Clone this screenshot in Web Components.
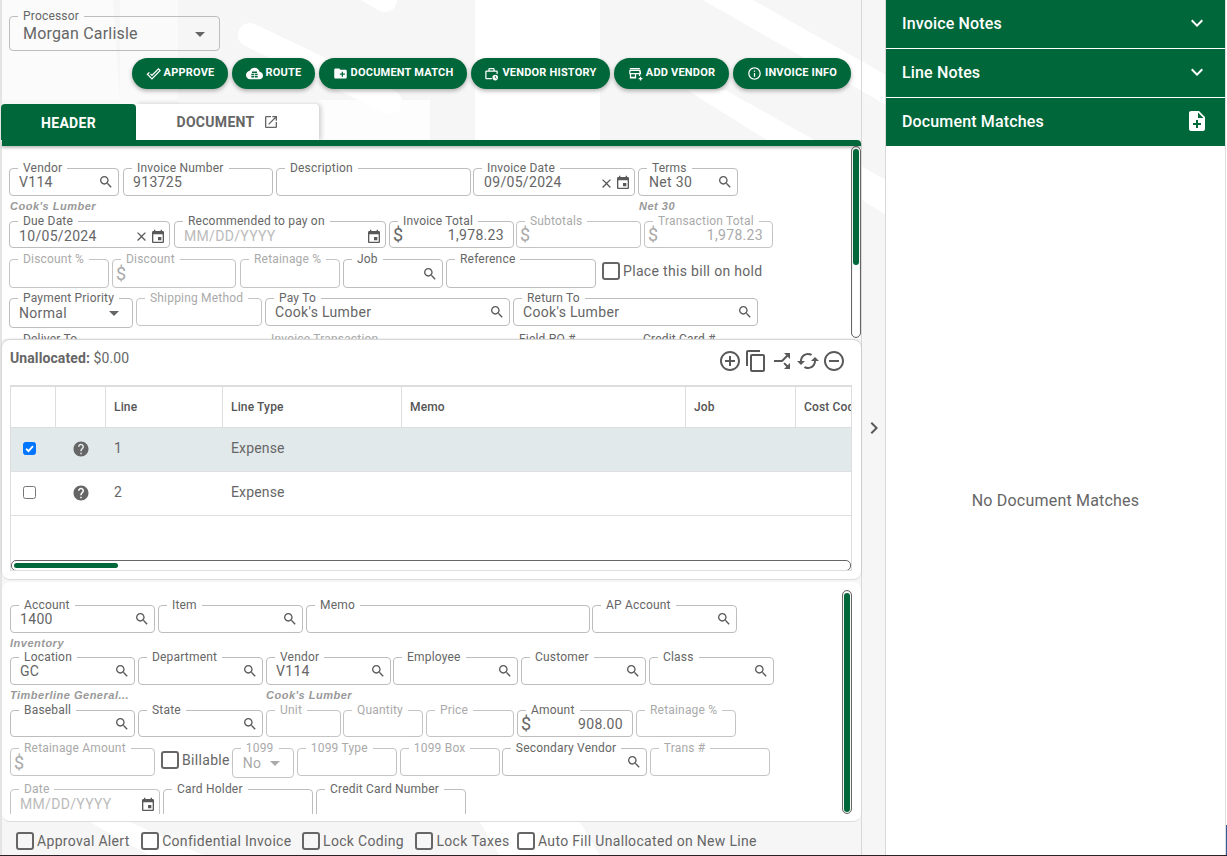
<!DOCTYPE html>
<html><head><meta charset="utf-8">
<style>
html,body{margin:0;padding:0;height:856px;overflow:hidden;background:#fff}
body{font-family:Roboto,"Liberation Sans",sans-serif;color:#666}
</style></head>
<body>
<invoice-app></invoice-app>
<script>
const P={
search:'M15.5 14h-.79l-.28-.27C15.41 12.59 16 11.11 16 9.5 16 5.91 13.09 3 9.5 3S3 5.91 3 9.5 5.91 16 9.5 16c1.61 0 3.09-.59 4.23-1.57l.27.28v.79l5 4.99L20.49 19l-4.99-5zm-6 0C7.01 14 5 11.99 5 9.5S7.01 5 9.5 5 14 7.01 14 9.5 11.99 14 9.5 14z',
event:'M17 12h-5v5h5v-5zM16 1v2H8V1H6v2H5c-1.11 0-1.99.9-1.99 2L3 19c0 1.1.89 2 2 2h14c1.1 0 2-.9 2-2V5c0-1.1-.9-2-2-2h-1V1h-2zm3 18H5V8h14v11z',
close:'M19 6.41L17.59 5 12 10.59 6.41 5 5 6.41 10.59 12 5 17.59 6.41 19 12 13.41 17.59 19 19 17.59 13.41 12z',
folder:'M20 6h-8l-2-2H4c-1.11 0-1.99.89-1.99 2L2 18c0 1.11.89 2 2 2h16c1.11 0 2-.89 2-2V8c0-1.11-.89-2-2-2zm-1 8h-3v3h-2v-3h-3v-2h3V9h2v3h3v2z',
info:'M11 7h2v2h-2zm0 4h2v6h-2zm1-9C6.48 2 2 6.48 2 12s4.48 10 10 10 10-4.48 10-10S17.52 2 12 2zm0 18c-4.41 0-8-3.59-8-8s3.59-8 8-8 8 3.59 8 8-3.59 8-8 8z',
open:'M19 19H5V5h7V3H5c-1.11 0-2 .9-2 2v14c0 1.1.89 2 2 2h14c1.1 0 2-.9 2-2v-7h-2v7zM14 3v2h3.59l-9.83 9.83 1.41 1.41L19 6.41V10h2V3h-7z',
help:'M12 2C6.48 2 2 6.48 2 12s4.48 10 10 10 10-4.48 10-10S17.52 2 12 2zm1 17h-2v-2h2v2zm2.07-7.75l-.9.92C13.45 12.9 13 13.5 13 15h-2v-.5c0-1.1.45-2.1 1.17-2.83l1.24-1.26c.37-.36.59-.86.59-1.41 0-1.1-.9-2-2-2s-2 .9-2 2H8c0-2.21 1.79-4 4-4s4 1.79 4 4c0 .88-.36 1.68-.93 2.25z',
add:'M13 7h-2v4H7v2h4v4h2v-4h4v-2h-4V7zm-1-5C6.48 2 2 6.48 2 12s4.48 10 10 10 10-4.48 10-10S17.52 2 12 2zm0 18c-4.41 0-8-3.59-8-8s3.59-8 8-8 8 3.59 8 8-3.59 8-8 8z',
copy:'M16 1H4c-1.1 0-2 .9-2 2v14h2V3h12V1zm3 4H8c-1.1 0-2 .9-2 2v14c0 1.1.9 2 2 2h11c1.1 0 2-.9 2-2V7c0-1.1-.9-2-2-2zm0 16H8V7h11v14z',
remove:'M7 11v2h10v-2H7zm5-9C6.48 2 2 6.48 2 12s4.48 10 10 10 10-4.48 10-10S17.52 2 12 2zm0 18c-4.41 0-8-3.59-8-8s3.59-8 8-8 8 3.59 8 8-3.59 8-8 8z',
split:'M14 4l2.29 2.29-2.88 2.88 1.42 1.42 2.88-2.88L20 10V4zm-4 0H4v6l2.29-2.29 4.71 4.7V20h2v-8.41l-5.29-5.3z',
sync:'M12 4V1L8 5l4 4V6c3.31 0 6 2.69 6 6 0 1.01-.25 1.97-.7 2.8l1.46 1.46C19.54 15.03 20 13.57 20 12c0-4.42-3.58-8-8-8zm0 14c-3.31 0-6-2.69-6-6 0-1.01.25-1.97.7-2.8L5.24 7.74C4.46 8.97 4 10.43 4 12c0 4.42 3.58 8 8 8v3l4-4-4-4v3z',
note:'M14 2H6c-1.1 0-1.99.9-1.99 2L4 20c0 1.1.89 2 1.99 2H18c1.1 0 2-.9 2-2V8l-6-6zm2 14h-3v3h-2v-3H8v-2h3v-3h2v3h3v2zm-3-7V3.5L18.5 9H13z',
more:'M16.59 8.59L12 13.17 7.41 8.59 6 10l6 6 6-6z',
right:'M10 6L8.59 7.41 13.17 12l-4.58 4.59L10 18l6-6z',
cloud:'M19.35 10.04C18.67 6.59 15.64 4 12 4 9.11 4 6.6 5.64 5.35 8.04 2.34 8.36 0 10.91 0 14c0 3.31 2.69 6 6 6h13c2.76 0 5-2.24 5-5 0-2.64-2.05-4.78-4.65-4.96zM8.5 9h7v2.2h-7zM7.5 12.5h4v1.6h-4zM12.5 12.5h4v1.6h-4zM7.5 15.2h4v2.4h-4zM12.5 15.2h4v2.4h-4z',
approve:'M.8 13.2 4.6 9.4l1.5 1.5-2.4 2.3 5.8 5.8L21.3 7.2l-1.4-1.4-10.4 10.4-3-3 1.4-1.4 1.6 1.6L19.9 3l4.2 4.2L9.5 21.8z',
history:'M9 3h6c1.1 0 2 .9 2 2v2h3c1.1 0 2 .9 2 2v4.2a6 6 0 0 0-2-.7V9H4v10h8.3c.2.7.5 1.4.9 2H4c-1.1 0-2-.9-2-2V9c0-1.1.9-2 2-2h3V5c0-1.1.9-2 2-2zm0 2v2h6V5zm9 9a4.5 4.5 0 1 1 0 9 4.5 4.5 0 0 1 0-9zm-.7 1.7v3.2l2.6 1.5.6-1-2-1.1v-2.6z',
store:'M3 3h16v2H3zM2 6h18l1 5v2h-1.5v3h-2v-3H13v7H3v-7H2v-2zm2.2 2-.5 3h14.6l-.5-3zM5 13v4h6v-4zm14 4h2v2h2v2h-2v2h-2v-2h-2v-2h2z'
};
const EO={approve:1,cloud:1,history:1,store:1};
const ico=(n,s,c)=>`<svg width="${s}" height="${s}" viewBox="0 0 24 24" fill="${c||'currentColor'}" style="display:block;flex:none"><path ${EO[n]?'fill-rule="evenodd"':''} d="${P[n]}"/></svg>`;
const def=(n,c)=>customElements.define(n,c);
class Base extends HTMLElement{
  constructor(){super();this.attachShadow({mode:'open'})}
  a(k,d=''){return this.hasAttribute(k)?this.getAttribute(k):d}
}
/* Outlined field */
def('x-field',class extends Base{connectedCallback(){
  const w=this.a('w'),h=this.a('h','35'),ml=this.a('ml','3'),off=this.hasAttribute('off'),icon=this.a('icon'),val=this.a('value'),ph=this.a('ph'),money=this.hasAttribute('money'),right=this.hasAttribute('right'),sel=this.hasAttribute('select'),clear=this.hasAttribute('clear'),pl=this.a('pl','9'),fs=this.a('fs','14'),vy=+this.a('vy','1');
  this.shadowRoot.innerHTML=`<style>
  :host{display:block;flex:none;width:${w}px;height:${h}px;margin-left:${ml}px;font-size:12px}
  fieldset{box-sizing:border-box;height:100%;width:100%;margin:0;padding:0;border:1px solid ${off?'#c4c4c4':'#bdbdbd'};border-radius:4px;min-width:0;background:transparent}
  legend{margin-left:8px;padding:0 5px;line-height:14px;height:14px;font-size:12px;letter-spacing:.19px;color:${off?'#aaa':'#666'};white-space:nowrap}
  .body{box-sizing:border-box;display:flex;align-items:center;width:100%;height:${+h-9}px;margin-top:${vy-7}px;padding:0 ${icon=='event'?3:4}px 0 ${money?0:pl}px}
  .val{flex:1;min-width:0;font-size:${fs}px;letter-spacing:${fs=='16'?'.19':'.32'}px;color:${off?'#aaa':'#666'};white-space:nowrap;text-align:${right?'right':'left'};padding-right:${right?'5px':'0'}}
  .ph{color:#bbb}
  .d{font-size:18px;margin-left:3px;color:${off?'#aaa':'#666'};width:13px}
  .i{color:#595959;display:flex;align-items:center;gap:1px}
  .lo{margin-top:2px}
  .car{width:0;height:0;border:5px solid transparent;border-top-color:${off?'#aaa':'#666'};border-bottom:0;margin-right:${this.a('cm','9')}px;margin-top:1px}
  </style><fieldset><legend>${this.a('label')}</legend><div class="body">${money?'<span class="d">$</span>':''}<span class="val">${ph?`<span class="ph">${ph}</span>`:val}</span><span class="i ${icon=='event'?'lo':''}">${clear?ico('close',15,'#595959'):''}${icon?ico(icon,16):''}${sel?'<span class="car"></span>':''}</span></div></fieldset>`;
}});
/* Checkbox */
def('x-check',class extends Base{connectedCallback(){
  const ml=this.a('ml','0');
  this.shadowRoot.innerHTML=`<style>:host{display:flex;flex:none;align-items:center;gap:3px;margin-left:${ml}px;font-size:14px;letter-spacing:.32px;color:#666;white-space:nowrap}
  i{display:block;box-sizing:border-box;width:18px;height:18px;border:2px solid #666;border-radius:3px}</style><i></i><slot></slot>`;
}});
/* Helper caption */
def('x-hint',class extends Base{connectedCallback(){
  this.shadowRoot.innerHTML=`<style>:host{display:block;flex:none;width:${this.a('w','auto')}${this.hasAttribute('w')?'px':''};height:18px;font:italic 700 11px/20px "Liberation Sans",sans-serif;letter-spacing:.5px;color:#999;white-space:nowrap;margin-left:${this.a('ml','0')}px}</style><slot></slot>`;
}});
/* Action pill */
def('x-btn',class extends Base{connectedCallback(){
  const w=this.a('w');
  this.shadowRoot.innerHTML=`<style>:host{display:flex;box-sizing:border-box;width:${w}px;height:31px;align-items:center;justify-content:center;gap:${this.a('gap','3')}px;background:#00673a;color:#fff;border-radius:16px;font-size:11px;font-weight:700;letter-spacing:.2px;text-transform:uppercase;padding-bottom:3px;box-shadow:0 2px 4px rgba(0,0,0,.3)}
  svg{margin-top:3px}</style>${ico(this.a('icon'),+this.a('s','15'),'#fff')}<slot></slot>`;
}});
/* Accordion bar */
def('x-acc',class extends Base{connectedCallback(){
  this.shadowRoot.innerHTML=`<style>:host{display:flex;box-sizing:border-box;height:48px;flex:none;align-items:center;justify-content:space-between;background:#00673a;color:#fff;padding:0 16px 2px 16px;font-size:16px;font-weight:500;letter-spacing:.15px;margin-bottom:1px}</style><slot></slot>${ico(this.a('icon','more'),24,'#fff')}`;
}});
/* Scrollbars */
def('x-vbar',class extends Base{connectedCallback(){
  this.shadowRoot.innerHTML=`<style>:host{display:block;box-sizing:border-box;width:10px;height:${this.a('h')}px;border:1px solid #666;border-radius:5px;background:#fff;padding:2px 1px 1px;box-shadow:inset 0 0 1px #999}
  b{display:block;height:${this.a('t')}px;background:#00673a;border-radius:4px}</style><b></b>`;
}});
def('x-hbar',class extends Base{connectedCallback(){
  this.shadowRoot.innerHTML=`<style>:host{display:block;box-sizing:border-box;height:11px;border:1px solid #666;border-radius:5px;background:#fff;padding:2px 2px;}
  b{display:block;width:${this.a('t')}px;height:100%;background:#00673a;border-radius:3px}</style><b></b>`;
}});
/* Lines table */
def('x-lines',class extends Base{connectedCallback(){
  const cols='44px 50px 117px 179px 284px 110px 1fr';
  const row=(n,sel)=>`<div class="tr ${sel?'sel':''}"><div class="c k"><span class="cb ${sel?'on':''}">${sel?'<svg width="13" height="13" viewBox="0 0 13 13"><path d="M2.5 6.8 5.3 9.6 10.6 3.6" fill="none" stroke="#fff" stroke-width="2.2"/></svg>':''}</span></div><div class="c q">${ico('help',18,'#666')}</div><div class="t">${n}</div><div class="t">Expense</div></div>`;
  this.shadowRoot.innerHTML=`<style>:host{display:block;box-sizing:border-box;margin:0 9px 0 8px;height:186px;border:1px solid #ddd;border-top-width:2px;overflow:hidden;position:relative;background:#fff;font-size:14px;color:#666}
  .th,.tr{display:grid;grid-template-columns:${cols}}
  .th{height:40px;border-bottom:1px solid #ddd;font-size:12px;font-weight:500;color:#555;letter-spacing:.15px}
  .th div{border-left:1px solid #ddd;padding-left:8px;line-height:41px;white-space:nowrap;overflow:hidden}
  .th div:first-child{border-left:0}
  .tr{height:43px;border-bottom:1px solid #e0e0e0;align-items:center;letter-spacing:.16px}
  .sel{background:#e2e9eb}
  .t{padding-left:9px;padding-bottom:4px}
  .c{display:flex;justify-content:center;padding-bottom:1px}
  .k{padding-bottom:3px}
  .cb{box-sizing:border-box;display:flex;align-items:center;justify-content:center;width:13px;height:13px;border:1px solid #767676;border-radius:2.5px;background:#fff;margin-left:-7px}
  .cb.on{background:#0075ff;border-color:#0075ff}
  .q{margin-left:2px}
  x-hbar{position:absolute;left:0;right:0;top:173px}
  </style><div class="th"><div></div><div></div><div>Line</div><div>Line Type</div><div>Memo</div><div>Job</div><div>Cost Code</div></div>${row(1,1)}${row(2,0)}<x-hbar t="104"></x-hbar>`;
}});
/* Header form panel */
def('x-header-form',class extends Base{connectedCallback(){
  this.shadowRoot.innerHTML=`<style>:host{display:block;position:relative;height:193px;overflow:hidden;background:#fff;box-sizing:border-box;padding:15px 0 0 7px;margin-left:0}
  .r{display:flex;align-items:flex-start}
  x-vbar{position:absolute;right:0;top:0}
  </style>
  <div class="r"><x-field ml="0" w="110" label="Vendor" value="V114" icon="search"></x-field><x-field ml="4" w="150" label="Invoice Number" value="913725"></x-field><x-field w="195" label="Description"></x-field><x-field ml="2" w="162" label="Invoice Date" value="09/05/2024" icon="event" clear pl="10"></x-field><x-field w="100" label="Terms" value="Net 30" icon="search" pl="10"></x-field></div>
  <div class="r"><x-hint w="629" ml="1">Cook's Lumber</x-hint><x-hint>Net 30</x-hint></div>
  <div class="r"><x-field ml="0" h="34" w="161" label="Due Date" value="10/05/2024" icon="event" clear vy="2"></x-field><x-field ml="4" h="34" w="212" label="Recommended to pay on" ph="MM/DD/YYYY" icon="event" vy="2"></x-field><x-field h="34" w="125" label="Invoice Total" value="1,978.23" money right></x-field><x-field ml="2" h="34" w="125" off label="Subtotals" money></x-field><x-field h="34" w="129" off label="Transaction Total" value="1,978.23" money right></x-field></div>
  <div class="r" style="margin-top:4px"><x-field ml="0" h="36" w="100" off label="Discount %"></x-field><x-field h="36" w="124" off label="Discount" money></x-field><x-field ml="4" h="36" w="100" off label="Retainage %"></x-field><x-field h="36" w="100" label="Job" icon="search"></x-field><x-field h="36" w="150" label="Reference"></x-field><x-check ml="6" style="margin-top:10px">Place this bill on hold</x-check></div>
  <div class="r" style="margin-top:3px"><x-field ml="0" h="37" w="124" label="Payment Priority" value="Normal" select></x-field><x-field h="35" w="126" off label="Shipping Method"></x-field><x-field h="35" w="245" label="Pay To" value="Cook's Lumber" icon="search"></x-field><x-field h="35" w="245" label="Return To" value="Cook's Lumber" icon="search"></x-field></div>
  <div class="r" style="margin-top:4px"><x-field ml="0" w="245" label="Deliver To"></x-field><x-field w="245" off label="Invoice Transaction"></x-field><x-field w="121" label="Field PO #"></x-field><x-field w="121" label="Credit Card #"></x-field></div>
  <x-vbar h="192" t="116"></x-vbar>`;
}});
/* Line detail panel */
def('x-line-form',class extends Base{connectedCallback(){
  this.shadowRoot.innerHTML=`<style>:host{display:block;position:relative;background:#fff;box-sizing:border-box;height:240px;margin-top:2px;border-radius:8px;border-bottom:1px solid #ddd;padding:16px 0 0 8px}
  .clip{height:216px;overflow:hidden}
  .r{display:flex;align-items:flex-start}
  x-vbar{position:absolute;right:9px;top:8px}
  x-hint{line-height:21px;height:17px}
  </style><div class="clip">
  <div class="r"><x-field ml="0" w="145" label="Account" value="1400" icon="search"></x-field><x-field w="145" label="Item" icon="search"></x-field><x-field w="284" label="Memo"></x-field><x-field ml="2" w="145" label="AP Account" icon="search"></x-field></div>
  <div class="r"><x-hint style="height:17px;line-height:21px">Inventory</x-hint></div>
  <div class="r"><x-field ml="0" w="125" label="Location" value="GC" icon="search"></x-field><x-field w="125" label="Department" icon="search"></x-field><x-field w="125" label="Vendor" value="V114" icon="search"></x-field><x-field ml="2" w="125" label="Employee" icon="search"></x-field><x-field w="125" label="Customer" icon="search"></x-field><x-field w="125" label="Class" icon="search"></x-field></div>
  <div class="r"><x-hint w="256" style="height:17px;line-height:21px">Timberline General...</x-hint><x-hint style="height:17px;line-height:21px">Cook's Lumber</x-hint></div>
  <div class="r" style="margin-top:1px"><x-field ml="0" h="34" w="125" label="Baseball" icon="search"></x-field><x-field h="34" w="125" label="State" icon="search"></x-field><x-field h="34" w="75" off label="Unit"></x-field><x-field ml="2" h="34" w="80" off label="Quantity"></x-field><x-field h="34" w="88" off label="Price"></x-field><x-field h="34" w="116" label="Amount" value="908.00" money right></x-field><x-field h="34" w="100" off label="Retainage %"></x-field></div>
  <div class="r" style="margin-top:4px"><x-field ml="0" w="145" off label="Retainage Amount" money></x-field><x-check ml="6" style="margin-top:5px;height:28px">Billable</x-check><x-field h="37" ml="2" w="62" off label="1099" value="No" select pl="10"></x-field><x-field w="100" off label="1099 Type"></x-field><x-field w="100" off label="1099 Box"></x-field><x-field ml="2" w="145" label="Secondary Vendor" icon="search"></x-field><x-field w="120" off label="Trans #"></x-field></div>
  <div class="r" style="margin-top:4px"><x-field ml="0" w="150" h="45" off label="Date" ph="MM/DD/YYYY" icon="event" vy="-3"></x-field><x-field w="150" h="45" label="Card Holder"></x-field><x-field w="150" h="45" label="Credit Card Number"></x-field></div>
  </div><x-vbar h="224" t="219"></x-vbar>`;
}});
/* Root */
def('invoice-app',class extends Base{connectedCallback(){
  this.shadowRoot.innerHTML=`<style>
  :host{display:grid;grid-template-columns:862px 24px 339px 2px;height:856px;position:relative;overflow:hidden;background:#f8f8f8}
  .bg{position:absolute;left:0;top:0;width:886px;height:856px;z-index:0}
  .left{position:relative;z-index:1;border-left:2px solid #e4e4e4;border-right:1px solid #d8d8d8;box-sizing:border-box;height:855px;display:flex;flex-direction:column}
  .proc{padding:9px 0 0 7px;height:42px}
  .btns{display:flex;gap:4px;margin:7px 0 0 130px}
  .tabs{display:flex;margin:15px 0 0 -1px;height:36px}
  .tab{display:flex;align-items:center;justify-content:center;font-size:14px;font-weight:700;letter-spacing:.3px;gap:8px;box-sizing:border-box}
  .t1{width:135px;background:#00673a;color:#fff;border-radius:4px 4px 0 0;padding-top:1px}
  .t2{width:183px;background:#fff;color:#666;box-shadow:2px 0 5px rgba(0,0,0,.2);border-radius:0 4px 0 0}
  .bar{height:6px;background:#00673a;border-radius:0 4px 0 0;box-shadow:0 2px 3px rgba(0,0,0,.25);position:relative;z-index:1}
  .lines{background:#fff;height:240px;margin-top:1px;border-radius:8px;box-shadow:0 -1px 2px rgba(0,0,0,.18);position:relative;z-index:2;border-bottom:1px solid #ddd;box-sizing:border-box}
  .lh{display:flex;justify-content:space-between;height:45px;padding:10px 15px 0 8px;box-sizing:border-box;font-size:14px;color:#666;letter-spacing:.1px}
  .lh b{color:#666;font-weight:700}
  .tools{display:flex;align-items:center;color:#595959;height:22px;gap:2px}
  .foot{display:flex;align-items:center;height:33px;padding:4px 0 0 14px;box-sizing:border-box;position:relative}
  .mid{position:relative;z-index:1;height:855px;display:flex;align-items:center;box-sizing:border-box;border-right:1px solid #d8d8d8;color:#595959}
  .right{position:relative;z-index:1;background:#fff;height:855px;display:flex;flex-direction:column}
  .none{flex:1;display:flex;align-items:center;justify-content:center;font-size:16px;color:#666;letter-spacing:.2px;padding-bottom:2px}
  .edge{background:#fff;position:relative;z-index:1;border-left:1px solid #ddd;box-sizing:border-box}
  .blue{position:absolute;right:0;top:825px;width:1px;height:30px;background:#2f5d9f;z-index:2}
  .base{position:absolute;left:0;right:0;bottom:0;height:1px;background:#2a2226;z-index:3}
  </style>
  <svg class="bg" viewBox="0 0 886 856" aria-hidden="true"><rect width="886" height="856" fill="#f6f6f6"/><path d="M0 0H113L120 100H0Z" fill="#fbfbfb"/><path d="M120 0H178V140H120Z" fill="#fafafa"/><path d="M178 100H430V140H178Z" fill="#fdfdfd"/><path d="M475 0H600V140H475Z" fill="#fff"/><path d="M255 -75 385 0" stroke="#fff" stroke-width="24" stroke-linecap="round"/><path d="M250 35 390 102" stroke="#fff" stroke-width="24" stroke-linecap="round"/><path d="M703 0H753L886 75V105Z" fill="#fff"/><path d="M687 90H725L886 180V215Z" fill="#fff"/><path d="M90 822H130L205 856H150Z" fill="#fff"/><path d="M480 822H580L600 856H500Z" fill="#fff"/></svg>
  <div class="left">
   <div class="proc"><x-field ml="0" w="211" h="42" label="Processor" value="Morgan Carlisle" select fs="16" pl="13" cm="10"></x-field></div>
   <div class="btns"><x-btn w="96" icon="approve">Approve</x-btn><x-btn w="83" icon="cloud" s="17">Route</x-btn><x-btn w="148" icon="folder">Document Match</x-btn><x-btn w="139" icon="history">Vendor History</x-btn><x-btn w="115" icon="store">Add Vendor</x-btn><x-btn w="118" icon="info">Invoice Info</x-btn></div>
   <div class="tabs"><div class="tab t1">HEADER</div><div class="tab t2">DOCUMENT ${ico('open',16,'#666')}</div></div>
   <div class="bar"></div>
   <x-header-form></x-header-form>
   <div class="lines"><div class="lh"><div><b>Unallocated:</b> $0.00</div><div class="tools">${ico('add',24)}${ico('copy',24)}<span style="transform:rotate(90deg)">${ico('split',24)}</span><span style="transform:rotate(90deg)">${ico('sync',24)}</span>${ico('remove',24)}</div></div><x-lines></x-lines></div>
   <x-line-form></x-line-form>
   <div class="foot"><x-check style="margin-right:11.5px">Approval Alert</x-check><x-check style="margin-right:10.5px">Confidential Invoice</x-check><x-check style="margin-right:11.5px">Lock Coding</x-check><x-check style="margin-right:7.5px">Lock Taxes</x-check><x-check>Auto Fill Unallocated on New Line</x-check></div>
  </div>
  <div class="mid">${ico('right',24)}</div>
  <div class="right"><x-acc>Invoice Notes</x-acc><x-acc>Line Notes</x-acc><x-acc icon="note">Document Matches</x-acc><div class="none">No Document Matches</div></div>
  <div class="edge"></div>
  <div class="blue"></div>
  <div class="base"></div>`;
}});
</script>
</body></html>
